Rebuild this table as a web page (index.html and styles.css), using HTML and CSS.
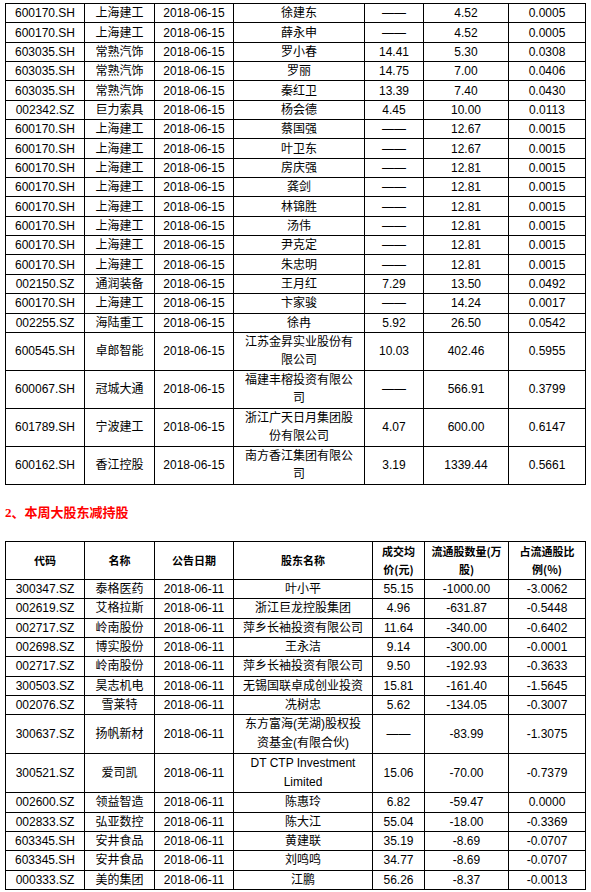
FILE: index.html
```html
<!DOCTYPE html>
<html lang="zh-CN">
<head>
<meta charset="utf-8">
<title>大股东增减持</title>
<link rel="stylesheet" href="styles.css">
</head>
<body>
<div class="page">
<table class="grid t1">
<colgroup><col class="w1"><col class="w2"><col class="w3"><col class="w4a"><col class="w5a"><col class="w6a"><col class="w7"></colgroup>
<tbody>
<tr class="s"><td>600170.SH</td><td>上海建工</td><td>2018-06-15</td><td>徐建东</td><td>——</td><td>4.52</td><td>0.0005</td></tr>
<tr class="s"><td>600170.SH</td><td>上海建工</td><td>2018-06-15</td><td>薛永申</td><td>——</td><td>4.52</td><td>0.0005</td></tr>
<tr class="s"><td>603035.SH</td><td>常熟汽饰</td><td>2018-06-15</td><td>罗小春</td><td>14.41</td><td>5.30</td><td>0.0308</td></tr>
<tr class="s"><td>603035.SH</td><td>常熟汽饰</td><td>2018-06-15</td><td>罗丽</td><td>14.75</td><td>7.00</td><td>0.0406</td></tr>
<tr class="s"><td>603035.SH</td><td>常熟汽饰</td><td>2018-06-15</td><td>秦红卫</td><td>13.39</td><td>7.40</td><td>0.0430</td></tr>
<tr class="s"><td>002342.SZ</td><td>巨力索具</td><td>2018-06-15</td><td>杨会德</td><td>4.45</td><td>10.00</td><td>0.0113</td></tr>
<tr class="s"><td>600170.SH</td><td>上海建工</td><td>2018-06-15</td><td>蔡国强</td><td>——</td><td>12.67</td><td>0.0015</td></tr>
<tr class="s"><td>600170.SH</td><td>上海建工</td><td>2018-06-15</td><td>叶卫东</td><td>——</td><td>12.67</td><td>0.0015</td></tr>
<tr class="s"><td>600170.SH</td><td>上海建工</td><td>2018-06-15</td><td>房庆强</td><td>——</td><td>12.81</td><td>0.0015</td></tr>
<tr class="s"><td>600170.SH</td><td>上海建工</td><td>2018-06-15</td><td>龚剑</td><td>——</td><td>12.81</td><td>0.0015</td></tr>
<tr class="s"><td>600170.SH</td><td>上海建工</td><td>2018-06-15</td><td>林锦胜</td><td>——</td><td>12.81</td><td>0.0015</td></tr>
<tr class="s"><td>600170.SH</td><td>上海建工</td><td>2018-06-15</td><td>汤伟</td><td>——</td><td>12.81</td><td>0.0015</td></tr>
<tr class="s"><td>600170.SH</td><td>上海建工</td><td>2018-06-15</td><td>尹克定</td><td>——</td><td>12.81</td><td>0.0015</td></tr>
<tr class="s"><td>600170.SH</td><td>上海建工</td><td>2018-06-15</td><td>朱忠明</td><td>——</td><td>12.81</td><td>0.0015</td></tr>
<tr class="s"><td>002150.SZ</td><td>通润装备</td><td>2018-06-15</td><td>王月红</td><td>7.29</td><td>13.50</td><td>0.0492</td></tr>
<tr class="s"><td>600170.SH</td><td>上海建工</td><td>2018-06-15</td><td>卞家骏</td><td>——</td><td>14.24</td><td>0.0017</td></tr>
<tr class="s"><td>002255.SZ</td><td>海陆重工</td><td>2018-06-15</td><td>徐冉</td><td>5.92</td><td>26.50</td><td>0.0542</td></tr>
<tr class="d"><td>600545.SH</td><td>卓郎智能</td><td>2018-06-15</td><td>江苏金昇实业股份有限公司</td><td>10.03</td><td>402.46</td><td>0.5955</td></tr>
<tr class="d"><td>600067.SH</td><td>冠城大通</td><td>2018-06-15</td><td>福建丰榕投资有限公司</td><td>——</td><td>566.91</td><td>0.3799</td></tr>
<tr class="d"><td>601789.SH</td><td>宁波建工</td><td>2018-06-15</td><td>浙江广天日月集团股份有限公司</td><td>4.07</td><td>600.00</td><td>0.6147</td></tr>
<tr class="d"><td>600162.SH</td><td>香江控股</td><td>2018-06-15</td><td>南方香江集团有限公司</td><td>3.19</td><td>1339.44</td><td>0.5661</td></tr>
</tbody>
</table>

<h2 class="section-title">2、本周大股东减持股</h2>

<table class="grid t2">
<colgroup><col class="w1"><col class="w2"><col class="w3"><col class="w4b"><col class="w5b"><col class="w6b"><col class="w7"></colgroup>
<thead>
<tr class="h"><th>代码</th><th>名称</th><th>公告日期</th><th>股东名称</th><th>成交均价(元)</th><th>流通股数量(万股)</th><th>占流通股比例(%)</th></tr>
</thead>
<tbody>
<tr class="s"><td>300347.SZ</td><td>泰格医药</td><td>2018-06-11</td><td>叶小平</td><td>55.15</td><td>-1000.00</td><td>-3.0062</td></tr>
<tr class="s"><td>002619.SZ</td><td>艾格拉斯</td><td>2018-06-11</td><td>浙江巨龙控股集团</td><td>4.96</td><td>-631.87</td><td>-0.5448</td></tr>
<tr class="s"><td>002717.SZ</td><td>岭南股份</td><td>2018-06-11</td><td>萍乡长袖投资有限公司</td><td>11.64</td><td>-340.00</td><td>-0.6402</td></tr>
<tr class="s"><td>002698.SZ</td><td>博实股份</td><td>2018-06-11</td><td>王永洁</td><td>9.14</td><td>-300.00</td><td>-0.0001</td></tr>
<tr class="s"><td>002717.SZ</td><td>岭南股份</td><td>2018-06-11</td><td>萍乡长袖投资有限公司</td><td>9.50</td><td>-192.93</td><td>-0.3633</td></tr>
<tr class="s"><td>300503.SZ</td><td>昊志机电</td><td>2018-06-11</td><td>无锡国联卓成创业投资</td><td>15.81</td><td>-161.40</td><td>-1.5645</td></tr>
<tr class="s"><td>002076.SZ</td><td>雪莱特</td><td>2018-06-11</td><td>冼树忠</td><td>5.62</td><td>-134.05</td><td>-0.3007</td></tr>
<tr class="d"><td>300637.SZ</td><td>扬帆新材</td><td>2018-06-11</td><td>东方富海(芜湖)股权投资基金(有限合伙)</td><td>——</td><td>-83.99</td><td>-1.3075</td></tr>
<tr class="d"><td>300521.SZ</td><td>爱司凯</td><td>2018-06-11</td><td>DT CTP Investment Limited</td><td>15.06</td><td>-70.00</td><td>-0.7379</td></tr>
<tr class="s"><td>002600.SZ</td><td>领益智造</td><td>2018-06-11</td><td>陈惠玲</td><td>6.82</td><td>-59.47</td><td>0.0000</td></tr>
<tr class="s"><td>002833.SZ</td><td>弘亚数控</td><td>2018-06-11</td><td>陈大江</td><td>55.04</td><td>-18.00</td><td>-0.3369</td></tr>
<tr class="s"><td>603345.SH</td><td>安井食品</td><td>2018-06-11</td><td>黄建联</td><td>35.19</td><td>-8.69</td><td>-0.0707</td></tr>
<tr class="s"><td>603345.SH</td><td>安井食品</td><td>2018-06-11</td><td>刘鸣鸣</td><td>34.77</td><td>-8.69</td><td>-0.0707</td></tr>
<tr class="s"><td>000333.SZ</td><td>美的集团</td><td>2018-06-11</td><td>江鹏</td><td>56.26</td><td>-8.37</td><td>-0.0013</td></tr>
</tbody>
</table>
</div>
</body>
</html>
```

FILE: styles.css
```css
html, body {
  margin: 0;
  padding: 0;
  background: #ffffff;
}

.page {
  padding: 3px 0 0 5px;
  font-family: "Liberation Sans", "Noto Sans CJK SC", sans-serif;
  font-size: 12px;
  color: #000000;
}

.grid {
  border-collapse: collapse;
  table-layout: fixed;
  width: 581px;
}

.grid td,
.grid th {
  border: 1px solid #000000;
  padding: 0 6px;
  line-height: 18px;
  text-align: center;
  vertical-align: middle;
  font-weight: normal;
}

.grid tr.s { height: 19.35px; }
.grid tr.d { height: 38px; }
.grid tr.h { height: 38px; }

.t2 tr.d td { line-height: 19px; }

.grid th {
  font-family: "Noto Sans CJK SC", sans-serif;
  font-size: 11px;
  font-weight: 700;
  line-height: 18px;
}

.w1 { width: 79px; }
.w2 { width: 70px; }
.w3 { width: 79px; }
.w4a { width: 131px; }
.w5a { width: 59px; }
.w6a { width: 85px; }
.w4b { width: 139px; }
.w5b { width: 52px; }
.w6b { width: 84px; }
.w7 { width: 77px; }

.section-title {
  margin: 0;
  height: 56px;
  line-height: 56px;
  font-family: "Liberation Serif", "Noto Sans CJK SC", serif;
  font-size: 13px;
  font-weight: 700;
  color: #ff0000;
}
```
